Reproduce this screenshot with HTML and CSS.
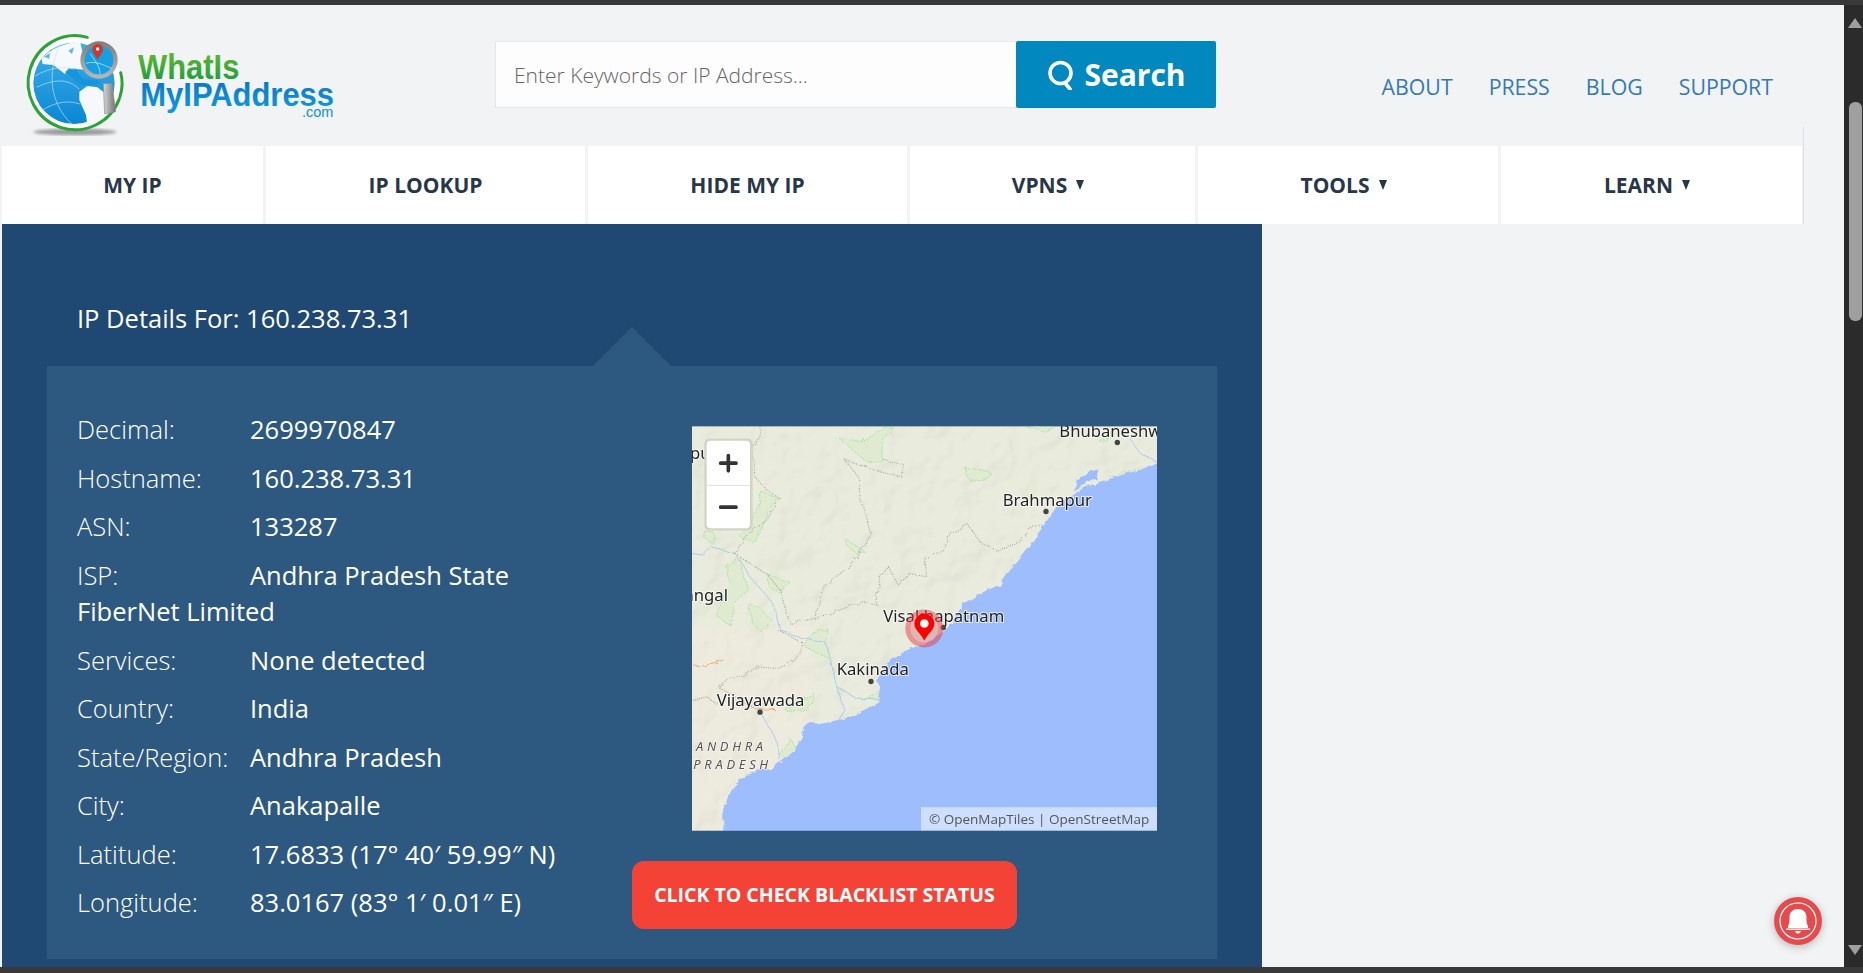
FILE: index.html
```html
<!DOCTYPE html>
<html>

	<head>
		<meta charset="utf-8">
		<title>IP Details</title>
		<link rel="stylesheet" href="styles.css">
	</head>

	<body>
		<div class="topbar"></div>

		<div class="window">
			<div class="page">

				<!-- header -->
				<div class="header">
					<a class="logo" href="#">
						<svg width="320" height="115" viewBox="60 75 960 345">
							<defs>
								<linearGradient id="lgGreen" x1="0" y1="0" x2="0" y2="1">
									<stop offset="0" stop-color="#6abb2e" />
									<stop offset="1" stop-color="#149a43" />
								</linearGradient>
								<linearGradient id="lgBlue" x1="0" y1="0" x2="0" y2="1">
									<stop offset="0" stop-color="#0a70c4" />
									<stop offset="1" stop-color="#0d9cdf" />
								</linearGradient>
								<linearGradient id="lgGlobe" x1="0" y1="0" x2="0" y2="1">
									<stop offset="0" stop-color="#3bb0ec" />
									<stop offset="1" stop-color="#0b86d2" />
								</linearGradient>
								<linearGradient id="lgRing" x1="0" y1="0" x2="0" y2="1">
									<stop offset="0" stop-color="#7d7d7d" />
									<stop offset="1" stop-color="#b9b9b9" />
								</linearGradient>
								<linearGradient id="lgHandle" x1="0" y1="0" x2="1" y2="0">
									<stop offset="0" stop-color="#d8d8d8" />
									<stop offset="1" stop-color="#6f6f6f" />
								</linearGradient>
								<filter id="softShadow"><feGaussianBlur stdDeviation="5" /></filter>
							</defs>
							<ellipse cx="225" cy="396" rx="125" ry="10" fill="#9a9b9d" filter="url(#softShadow)" />
							<circle cx="226" cy="248" r="138" fill="#fff" />
							<circle cx="222" cy="250" r="122" fill="url(#lgGlobe)" />
							<!-- land -->
							<path d="M125 178 C150 145 195 128 240 126 L262 210 L205 205 L195 222 L160 195 L128 192 Z" fill="#f6f9fc" />
							<path d="M132 170 L150 160 L148 176 Z M205 152 L222 142 L216 162 Z" fill="#58b7ec" />
							<path d="M238 275 L262 258 L292 262 L330 290 L330 340 L300 372 L262 376 L258 345 L238 300 Z" fill="#f6f9fc" />
							<path d="M195 215 L225 205 L248 238 L300 242 L288 256 L240 254 Z" fill="#1595dc" />
							<path d="M110 262 C170 232 210 240 238 268 M125 332 C170 302 210 302 240 312 M180 132 C140 220 150 310 215 372 M105 228 C150 202 190 198 225 208" fill="none" stroke="#bfe3f7" stroke-width="2" />
							<!-- ring -->
							<path d="M262 112 A141 141 0 1 0 358 296 M360 290 C368 265 368 240 362 218" fill="none" stroke="#2da23a" stroke-width="9" stroke-linecap="round" />
							<!-- magnifier -->
							<circle cx="297" cy="180" r="56" fill="url(#lgRing)" />
							<circle cx="297" cy="180" r="43" fill="#15a0e4" />
							<path d="M258 190 C290 180 320 200 335 205 M270 160 C290 190 300 200 300 222" fill="none" stroke="#d7eefa" stroke-width="2" />
							<path d="M293 180 C285 165 277 158 277 148 A16 16 0 0 1 309 148 C309 158 300 165 293 180 Z" fill="#d2352a" />
							<circle cx="293" cy="147" r="5" fill="#fff" />
							<path d="M310 251 L336 250 L347 335 L314 342 Z" fill="url(#lgHandle)" stroke="#8c8c8c" stroke-width="2" stroke-linejoin="round" />
							<text class="logo-what" x="414" y="237" textLength="304" lengthAdjust="spacingAndGlyphs">WhatIs</text>
							<text class="logo-myip" x="421" y="317" textLength="581" lengthAdjust="spacingAndGlyphs">MyIPAddress</text>
							<text class="logo-com" x="906" y="352" textLength="94" lengthAdjust="spacingAndGlyphs">.com</text>
						</svg>
					</a>

					<form class="search">
						<input class="search-input" type="text" placeholder="Enter Keywords or IP Address...">
						<button class="search-btn" type="button">
							<svg width="28" height="30" viewBox="0 0 28 30">
								<circle cx="14.5" cy="13" r="10.5" fill="none" stroke="#fff" stroke-width="3.6" />
								<path d="M19 23 L24 29" fill="none" stroke="#fff" stroke-width="3.6" stroke-linecap="round" />
							</svg>
							Search
						</button>
					</form>

					<div class="toplinks">
						<a href="#">ABOUT</a>
						<a href="#">PRESS</a>
						<a href="#">BLOG</a>
						<a href="#">SUPPORT</a>
					</div>
				</div>

				<!-- main menu -->
				<div class="nav">
					<a class="nav-item w1" href="#">MY IP</a>
					<a class="nav-item w2" href="#">IP LOOKUP</a>
					<a class="nav-item w2" href="#">HIDE MY IP</a>
					<a class="nav-item w4 drop" href="#">VPNS <span class="caret"></span></a>
					<a class="nav-item w5 drop" href="#">TOOLS <span class="caret"></span></a>
					<a class="nav-item w6 drop" href="#">LEARN <span class="caret"></span></a>
				</div>

				<!-- ip details -->
				<div class="main">
					<h1 class="title">IP Details For: 160.238.73.31</h1>

					<div class="panel">
						<div class="details">
							<div class="row"><span class="label">Decimal:</span>2699970847</div>
							<div class="row"><span class="label">Hostname:</span>160.238.73.31</div>
							<div class="row"><span class="label">ASN:</span>133287</div>
							<div class="row"><span class="label">ISP:</span>Andhra Pradesh State FiberNet Limited</div>
							<div class="row"><span class="label">Services:</span>None detected</div>
							<div class="row"><span class="label">Country:</span>India</div>
							<div class="row"><span class="label">State/Region:</span>Andhra Pradesh</div>
							<div class="row"><span class="label">City:</span>Anakapalle</div>
							<div class="row"><span class="label">Latitude:</span>17.6833 (17° 40′ 59.99″ N)</div>
							<div class="row"><span class="label">Longitude:</span>83.0167 (83° 1′ 0.01″ E)</div>
						</div>

						<div class="side">
							<svg class="map" width="465" height="405" viewBox="36 48 1395 1214">
								<defs>
									<filter id="hills" x="0" y="0" width="100%" height="100%">
										<feTurbulence type="fractalNoise" baseFrequency="0.009" numOctaves="3" seed="7" />
										<feDiffuseLighting surfaceScale="20" diffuseConstant="1.15" lighting-color="#fff">
											<feDistantLight azimuth="225" elevation="58" />
										</feDiffuseLighting>
									</filter>
									<filter id="wiggle" x="-5%" y="-5%" width="110%" height="110%">
										<feTurbulence type="fractalNoise" baseFrequency="0.035" numOctaves="3" seed="3" result="n" />
										<feDisplacementMap in="SourceGraphic" in2="n" scale="16" />
									</filter>
									<clipPath id="mapClip"><rect x="36" y="48" width="1395" height="1214" /></clipPath>
								</defs>
								<g clip-path="url(#mapClip)">
									<rect x="36" y="48" width="1395" height="1214" fill="#e9ecdd" />
									<rect x="36" y="650" width="360" height="612" fill="#ecebde" />

									<!-- hill shading -->
									<rect class="map-hills" x="36" y="48" width="1395" height="1214" filter="url(#hills)" />

									<g filter="url(#wiggle)">
										<!-- forest -->
										<g fill="#dfead0" stroke="#93e393" stroke-width="3" stroke-dasharray="3 3">
											<path d="M478 85 L540 92 L590 72 L610 50 L640 55 L605 90 L610 150 L560 155 L530 130 Z" />
											<path d="M855 172 L900 178 L935 190 L930 205 L870 210 L855 190 Z" />
											<path d="M245 245 L295 265 L265 300 L260 325 L220 395 L175 378 L190 360 L235 288 Z" />
											<path d="M495 385 L555 425 L530 430 L500 405 Z" />
											<path d="M140 470 L175 445 L205 540 L160 580 L155 650 L115 620 L115 590 L150 520 Z" />
											<path d="M265 495 L335 520 L295 545 L265 530 Z" />
											<path d="M205 585 L235 590 L275 630 L245 665 L220 640 Z" />
											<path d="M395 665 L445 658 L440 700 L445 742 L375 710 Z" />
											<path d="M310 900 L350 875 L405 848 L385 900 Z" />
											<path d="M300 1030 L330 985 L350 1015 L320 1050 Z" />
											<path d="M70 360 L105 370 L100 400 L75 385 Z" />
											<path d="M1040 48 L1130 48 L1090 65 Z" />
											<path d="M1255 90 L1285 85 L1280 98 Z" />
											<path d="M575 850 L595 840 L590 865 L565 862 Z" />
											<path d="M1290 200 L1340 185 L1390 172" fill="none" />
										</g>

										<!-- state borders -->
										<g fill="none" stroke="#a3a49b" stroke-width="3.5" stroke-dasharray="3 4">
											<path d="M240 48 L240 80 L215 110 L225 200 L260 240 L300 265 L260 330 L195 380 L165 430 L195 450 L265 495 L300 540 L320 610 L330 640 L400 625 L450 610 L545 575 L590 585 L600 500 L625 470 L655 525 L690 490 L740 500 L735 450 L800 410 L800 380 L860 340 L905 400 L950 420 L1010 405 L1060 345 L1090 345" />
											<path d="M495 150 L535 200 L540 260 L575 380 L505 470 L430 530 L405 620" />
											<path d="M495 150 L600 185 L665 200 L670 160 L610 150" />
											<path d="M295 660 L370 700 L345 750 L295 775 L230 770 L190 800 L150 800 L115 830 L180 870 L235 900" />
											<path d="M36 870 L80 860 L110 880" />
										</g>

										<!-- rivers and roads -->
										<g fill="none" stroke="#aecbf0" stroke-width="3">
											<path d="M36 430 L70 435 L95 410 L170 435 L210 500 L280 580 L300 660 L370 685 L440 700 L470 830 L495 900 L465 945" />
											<path d="M470 830 L530 865 L595 865" />
											<path d="M240 905 L290 990 L300 1050" />
											<path d="M1350 85 L1380 130 L1431 155" />
										</g>
										<path d="M36 760 L60 770 L130 750 M235 895 L285 898" fill="none" stroke="#f0ab7c" stroke-width="3" />

										<!-- sea -->
										<path d="M1500 130 L1431 155 L1385 178 L1340 190 L1260 215 L1230 225 L1200 240 L1165 265 L1130 290 L1095 340 L1060 390 L1020 440 L985 480 L955 525 L900 550 L850 580 L815 640 L790 665 L730 700 L680 720 L620 760 L590 810 L600 830 L595 870 L570 895 L520 920 L470 930 L430 940 L380 935 L365 980 L345 1020 L310 1050 L280 1070 L200 1090 L160 1130 L130 1190 L130 1320 L1500 1320 Z" fill="#9dbdfd" />
										<path d="M1255 178 L1222 185 L1192 215 L1178 240 L1220 222 L1250 205 Z" fill="#9dbdfd" />
									</g>

									<!-- places -->
									<g class="map-place">
										<text x="1138" y="80">Bhubaneshwar</text>
										<text x="968" y="288">Brahmapur</text>
										<text x="610" y="636">Visakhapatnam</text>
										<text x="470" y="796">Kakinada</text>
										<text x="110" y="888">Vijayawada</text>
										<text x="144" y="573" text-anchor="end">Warangal</text>
										<text x="112" y="148" text-anchor="end">Jeypur</text>
									</g>
									<g fill="#444">
										<circle cx="1312" cy="97" r="8" />
										<circle cx="1098" cy="304" r="8" />
										<circle cx="790" cy="652" r="8" />
										<circle cx="573" cy="814" r="8" />
										<circle cx="240" cy="906" r="8" />
									</g>
									<g class="map-state">
										<text x="48" y="1022">ANDHRA</text>
										<text x="40" y="1076">PRADESH</text>
									</g>

									<!-- marker -->
									<circle cx="733" cy="655" r="57" fill="#e63c46" fill-opacity=".5" />
									<circle cx="733" cy="655" r="42" fill="#d9d9d9" fill-opacity=".5" />
									<path d="M733 692 C722 668 703 660 703 640 A30 30 0 0 1 763 640 C763 660 744 668 733 692 Z" fill="#f00" />
									<circle cx="733" cy="640" r="13" fill="#fff" />

									<!-- zoom buttons -->
									<rect x="73" y="85" width="145" height="276" rx="15" fill="#d3d4c6" />
									<rect x="80" y="92" width="130" height="262" rx="12" fill="#fff" />
									<path d="M80 226 H210" stroke="#dddddd" stroke-width="2.5" />
									<path d="M145 136 V182 M122 159 H168 M122 291 H168" stroke="#333" stroke-width="11" stroke-linecap="round" fill="none" />

									<!-- attribution -->
									<rect x="723" y="1191" width="708" height="71" fill="#fff" fill-opacity=".5" />
									<text class="map-attr" x="747" y="1241">© OpenMapTiles | OpenStreetMap</text>
								</g>
							</svg>

							<a class="blacklist" href="#">CLICK TO CHECK BLACKLIST STATUS</a>
						</div>
					</div>
				</div>

				<!-- notification bell -->
				<div class="bell">
					<svg width="48" height="48" viewBox="0 0 48 48">
						<circle cx="24" cy="24" r="18" fill="none" stroke="#fff" stroke-width="1.2" />
						<path d="M14 29 C16 26 15.5 23 15.5 20 C15.5 15 19 12 24 12 C29 12 32.5 15 32.5 20 C32.5 23 32 26 34 29 L34 31 L14 31 Z" fill="#fff" />
						<path d="M12 32.2 H36" stroke="#fff" stroke-width="1.4" />
						<path d="M21 34 H27 C26.5 36 25 36.5 24 36.5 C23 36.5 21.5 36 21 34 Z" fill="#fff" />
					</svg>
				</div>
			</div>

			<!-- browser scrollbar -->
			<div class="scrollbar">
				<div class="arrow-up"></div>
				<div class="thumb"></div>
				<div class="arrow-down"></div>
			</div>
		</div>

		<div class="bottombar"></div>
	</body>

</html>
```

FILE: styles.css
```css
html,
body {
	height: 100%;
}

body {
	margin: 0;
	background-color: #393939;
	display: flex;
	flex-direction: column;
	overflow: hidden;
	font-family: "Open Sans", "Liberation Sans", sans-serif;
}

a {
	text-decoration: none;
}

.topbar {
	height: 5px;
	flex: none;
}

.bottombar {
	height: 6px;
	flex: none;
}

.window {
	flex: 1;
	display: flex;
	min-height: 0;
}

.page {
	flex: 1;
	position: relative;
	background-color: #f2f3f5;
	overflow: hidden;
}

/* header */
.header {
	height: 141px;
	display: flex;
	box-sizing: border-box;
	padding: 0 71px 0 20px;
}

.logo {
	margin-top: 20px;
	height: 115px;
}

.logo-what,
.logo-myip,
.logo-com {
	font-family: "Liberation Sans", sans-serif;
}

.logo-what {
	font-size: 104px;
	font-weight: bold;
	fill: url(#lgGreen);
}

.logo-myip {
	font-size: 102px;
	font-weight: bold;
	fill: url(#lgBlue);
}

.logo-com {
	font-size: 42px;
	fill: #0d8fd8;
}

.search {
	display: flex;
	margin: 36px 0 0 155px;
	height: 67px;
}

.search-input {
	width: 521px;
	box-sizing: border-box;
	border: 1px solid #e6e6e6;
	border-right: none;
	background-color: #fdfdfd;
	padding: 0 18px;
	font-family: inherit;
	font-size: 21px;
	font-weight: 300;
	outline: none;
}

.search-input::placeholder {
	color: #666;
	opacity: 1;
}

.search-btn {
	width: 200px;
	border: none;
	border-radius: 2px;
	background-color: #0088bf;
	color: #fff;
	font-family: inherit;
	font-size: 30px;
	font-weight: 700;
	display: flex;
	align-items: center;
	justify-content: center;
	gap: 10px;
	padding: 0;
}

.toplinks {
	margin-left: auto;
	display: flex;
	gap: 36px;
	padding-top: 67px;
	font-size: 21.3px;
	line-height: 29px;
}

.toplinks a {
	color: #337ab7;
}

/* main menu */
.nav {
	position: relative;
	display: flex;
	gap: 3px;
	margin-left: 2px;
	height: 78px;
}

.nav::after {
	content: "";
	position: absolute;
	left: 1801px;
	top: -19px;
	bottom: 0;
	width: 1px;
	background-color: #d9dfe8;
}

.nav-item {
	background-color: #fff;
	color: #28364a;
	font-size: 21px;
	font-weight: 700;
	display: flex;
	align-items: center;
	justify-content: center;
	gap: 9px;
	box-sizing: border-box;
}

.drop {
	padding-right: 9px;
}

.w1 {
	width: 261px;
}

.w2 {
	width: 319px;
}

.w4 {
	width: 285px;
}

.w5 {
	width: 300px;
}

.w6 {
	width: 301px;
}

.caret {
	width: 0;
	height: 0;
	border-left: 4.5px solid transparent;
	border-right: 4.5px solid transparent;
	border-top: 10px solid #28364a;
}

/* ip details */
.main {
	margin-left: 2px;
	width: 1260px;
	height: 760px;
	box-sizing: border-box;
	background-color: #1f4872;
	padding: 76px 45px 0;
}

.title {
	margin: 0 0 30px 30px;
	color: #fff;
	font-size: 25.5px;
	font-weight: 400;
	line-height: 36px;
}

.panel {
	position: relative;
	display: grid;
	grid-template-columns: 585px 1fr;
	height: 593px;
	background-color: #2d5880;
	color: #fff;
}

/* little triangle above the panel */
.panel::before {
	content: "";
	position: absolute;
	left: 546px;
	top: -39px;
	width: 0;
	height: 0;
	border-left: 39px solid transparent;
	border-right: 39px solid transparent;
	border-bottom: 39px solid #2d5880;
}

.details {
	padding: 45px 30px 0;
	font-size: 25.5px;
	line-height: 36.5px;
}

.row {
	margin-bottom: 12px;
}

.label {
	display: inline-block;
	width: 173px;
	font-weight: 300;
}

.side {
	display: flex;
	flex-direction: column;
	align-items: flex-start;
	padding-top: 60px;
}

.map {
	display: block;
	margin-left: 60px;
}

.map-hills {
	mix-blend-mode: multiply;
	opacity: .16;
}

.map-place text {
	font-family: "Noto Sans", sans-serif;
	font-size: 50px;
	fill: #222;
	stroke: #fff;
	stroke-opacity: .7;
	stroke-width: 6px;
	paint-order: stroke;
}

.map-state text {
	font-family: "Noto Sans", sans-serif;
	font-size: 39px;
	font-style: italic;
	letter-spacing: 11px;
	fill: #555;
	stroke: #fff;
	stroke-opacity: .6;
	stroke-width: 4px;
	paint-order: stroke;
}

.map-attr {
	font-family: "Open Sans", sans-serif;
	font-size: 40.5px;
	fill: #555;
}

.blacklist {
	margin-top: 30px;
	width: 385px;
	height: 68px;
	box-sizing: border-box;
	padding-bottom: 2px;
	border-radius: 12px;
	background-color: #f44336;
	color: #fff;
	font-size: 19.5px;
	font-weight: 700;
	display: flex;
	align-items: center;
	justify-content: center;
}

/* notification bell */
.bell {
	position: absolute;
	right: 22px;
	bottom: 22px;
	width: 48px;
	height: 48px;
	border-radius: 50%;
	background-color: #e54b4d;
	box-shadow: 0 2px 8px rgba(0, 0, 0, .25);
}

.bell svg {
	display: block;
}

/* browser scrollbar */
.scrollbar {
	width: 19px;
	flex: none;
	background-color: #2b2b2b;
	display: flex;
	flex-direction: column;
	padding-left: 4px;
	box-sizing: border-box;
}

.arrow-up {
	margin-top: 13px;
	width: 0;
	height: 0;
	border-left: 7px solid transparent;
	border-right: 7px solid transparent;
	border-bottom: 10px solid #9f9f9f;
}

.thumb {
	margin: 74px 0 0 1px;
	width: 13px;
	height: 219px;
	border-radius: 6px;
	background-color: #9f9f9f;
}

.arrow-down {
	margin-top: auto;
	margin-bottom: 12px;
	width: 0;
	height: 0;
	border-left: 7px solid transparent;
	border-right: 7px solid transparent;
	border-top: 10px solid #9f9f9f;
}
```
